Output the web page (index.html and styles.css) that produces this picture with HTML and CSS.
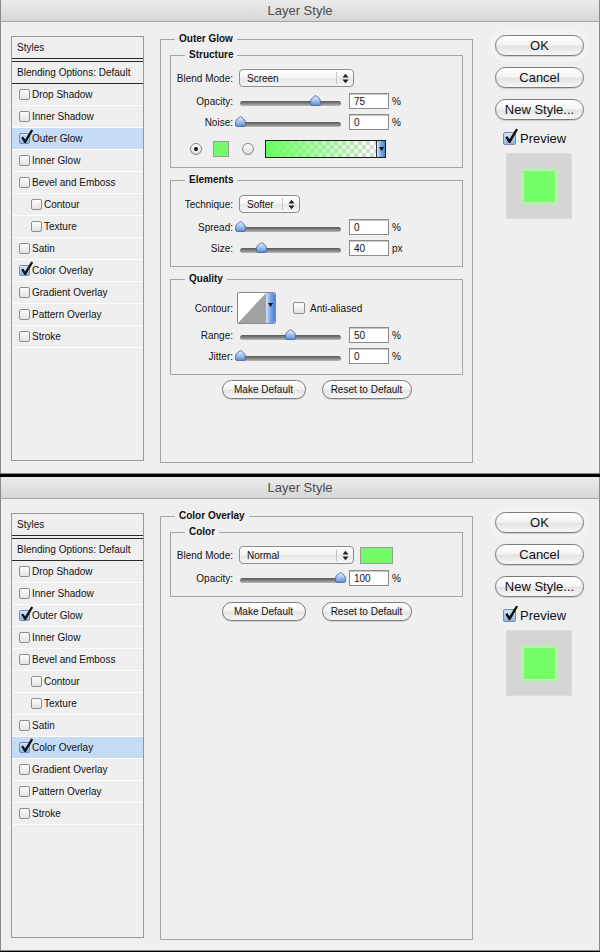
FILE: index.html
```html
<!DOCTYPE html>
<html lang="en">
<head>
    <meta charset="UTF-8">
    <title>Layer Style</title>
    <link rel="stylesheet" href="styles.css">
</head>
<body>
    <svg class="defs" width="0" height="0" aria-hidden="true">
        <defs>
            <linearGradient id="thumbFill" x1="0" y1="0" x2="0" y2="1">
                <stop offset="0" stop-color="#eef5ff"/>
                <stop offset="0.45" stop-color="#a9c8f0"/>
                <stop offset="1" stop-color="#5d90d8"/>
            </linearGradient>
        </defs>
    </svg>

    <!-- first dialog: outer glow -->
    <div class="dialog">
        <div class="titlebar">Layer Style</div>
        <div class="dialog-body">
            <ul class="style-list">
                <li class="list-head">Styles</li>
                <li class="list-blend">Blending Options: Default</li>
                <li><span class="check"></span>Drop Shadow</li>
                <li><span class="check"></span>Inner Shadow</li>
                <li class="selected"><span class="check on"><svg class="tick" viewBox="0 0 14 15"><path d="M1.2 8.8 3 7.6 5.1 10.6 11.2 0.6 13.2 1.4 5.9 14 4.5 14Z"/></svg></span>Outer Glow</li>
                <li><span class="check"></span>Inner Glow</li>
                <li><span class="check"></span>Bevel and Emboss</li>
                <li class="sub"><span class="check"></span>Contour</li>
                <li class="sub"><span class="check"></span>Texture</li>
                <li><span class="check"></span>Satin</li>
                <li><span class="check on"><svg class="tick" viewBox="0 0 14 15"><path d="M1.2 8.8 3 7.6 5.1 10.6 11.2 0.6 13.2 1.4 5.9 14 4.5 14Z"/></svg></span>Color Overlay</li>
                <li><span class="check"></span>Gradient Overlay</li>
                <li><span class="check"></span>Pattern Overlay</li>
                <li><span class="check"></span>Stroke</li>
            </ul>

            <fieldset class="group main-group">
                <legend>Outer Glow</legend>

                <fieldset class="group sub-group structure">
                    <legend>Structure</legend>
                    <div class="row row-select">
                        <span class="label">Blend Mode:</span>
                        <div class="popup popup-wide">
                            <span class="popup-text">Screen</span>
                            <span class="popup-arrows"><svg viewBox="0 0 7 11" width="7" height="11"><path d="M0.5 4.5 3.5 0.8 6.5 4.5Z M0.5 6.5 3.5 10.2 6.5 6.5Z"/></svg></span>
                        </div>
                    </div>
                    <div class="row">
                        <span class="label">Opacity:</span>
                        <div class="slider"><span class="thumb" style="--v:75"><svg viewBox="0 0 11 11"><path d="M5.5 0.6C7.6 2 10.4 3.6 10.4 6.2L10.4 9Q10.4 10.4 9 10.4L2 10.4Q0.6 10.4 0.6 9L0.6 6.2C0.6 3.6 3.4 2 5.5 0.6Z"/></svg></span></div>
                        <span class="num">75</span><span class="unit">%</span>
                    </div>
                    <div class="row">
                        <span class="label">Noise:</span>
                        <div class="slider"><span class="thumb" style="--v:0"><svg viewBox="0 0 11 11"><path d="M5.5 0.6C7.6 2 10.4 3.6 10.4 6.2L10.4 9Q10.4 10.4 9 10.4L2 10.4Q0.6 10.4 0.6 9L0.6 6.2C0.6 3.6 3.4 2 5.5 0.6Z"/></svg></span></div>
                        <span class="num">0</span><span class="unit">%</span>
                    </div>
                    <div class="row row-color">
                        <span class="radio on"></span>
                        <span class="swatch"></span>
                        <span class="radio"></span>
                        <div class="gradient">
                            <span class="gradient-fill"></span>
                            <span class="drop"><svg viewBox="0 0 5 4" width="5" height="4"><path d="M0 0H5L2.5 4Z"/></svg></span>
                        </div>
                    </div>
                </fieldset>

                <fieldset class="group sub-group elements">
                    <legend>Elements</legend>
                    <div class="row row-select">
                        <span class="label">Technique:</span>
                        <div class="popup popup-short">
                            <span class="popup-text">Softer</span>
                            <span class="popup-arrows"><svg viewBox="0 0 7 11" width="7" height="11"><path d="M0.5 4.5 3.5 0.8 6.5 4.5Z M0.5 6.5 3.5 10.2 6.5 6.5Z"/></svg></span>
                        </div>
                    </div>
                    <div class="row">
                        <span class="label">Spread:</span>
                        <div class="slider"><span class="thumb" style="--v:0"><svg viewBox="0 0 11 11"><path d="M5.5 0.6C7.6 2 10.4 3.6 10.4 6.2L10.4 9Q10.4 10.4 9 10.4L2 10.4Q0.6 10.4 0.6 9L0.6 6.2C0.6 3.6 3.4 2 5.5 0.6Z"/></svg></span></div>
                        <span class="num">0</span><span class="unit">%</span>
                    </div>
                    <div class="row">
                        <span class="label">Size:</span>
                        <div class="slider"><span class="thumb" style="--v:21"><svg viewBox="0 0 11 11"><path d="M5.5 0.6C7.6 2 10.4 3.6 10.4 6.2L10.4 9Q10.4 10.4 9 10.4L2 10.4Q0.6 10.4 0.6 9L0.6 6.2C0.6 3.6 3.4 2 5.5 0.6Z"/></svg></span></div>
                        <span class="num">40</span><span class="unit">px</span>
                    </div>
                </fieldset>

                <fieldset class="group sub-group quality">
                    <legend>Quality</legend>
                    <div class="row row-contour">
                        <span class="label">Contour:</span>
                        <div class="contour">
                            <svg class="contour-curve" viewBox="0 0 28 30" preserveAspectRatio="none"><path d="M0 30 28 0 28 30Z"/></svg>
                            <span class="drop"><svg viewBox="0 0 5 4" width="5" height="4"><path d="M0 0H5L2.5 4Z"/></svg></span>
                        </div>
                        <span class="check anti"></span>
                        <span class="check-label">Anti-aliased</span>
                    </div>
                    <div class="row row-range">
                        <span class="label">Range:</span>
                        <div class="slider"><span class="thumb" style="--v:50"><svg viewBox="0 0 11 11"><path d="M5.5 0.6C7.6 2 10.4 3.6 10.4 6.2L10.4 9Q10.4 10.4 9 10.4L2 10.4Q0.6 10.4 0.6 9L0.6 6.2C0.6 3.6 3.4 2 5.5 0.6Z"/></svg></span></div>
                        <span class="num">50</span><span class="unit">%</span>
                    </div>
                    <div class="row">
                        <span class="label">Jitter:</span>
                        <div class="slider"><span class="thumb" style="--v:0"><svg viewBox="0 0 11 11"><path d="M5.5 0.6C7.6 2 10.4 3.6 10.4 6.2L10.4 9Q10.4 10.4 9 10.4L2 10.4Q0.6 10.4 0.6 9L0.6 6.2C0.6 3.6 3.4 2 5.5 0.6Z"/></svg></span></div>
                        <span class="num">0</span><span class="unit">%</span>
                    </div>
                </fieldset>

                <div class="btn-row">
                    <button class="btn btn-small btn-make">Make Default</button>
                    <button class="btn btn-small btn-reset">Reset to Default</button>
                </div>
            </fieldset>

            <div class="side">
                <button class="btn btn-big btn-default">OK</button>
                <button class="btn btn-big">Cancel</button>
                <button class="btn btn-big">New Style...</button>
                <div class="preview-row">
                    <span class="check big on"><svg class="tick" viewBox="0 0 14 15"><path d="M1.2 8.8 3 7.6 5.1 10.6 11.2 0.6 13.2 1.4 5.9 14 4.5 14Z"/></svg></span>
                    <span>Preview</span>
                </div>
                <div class="preview-box"><span class="preview-swatch"></span></div>
            </div>
        </div>
    </div>

    <!-- second dialog: color overlay -->
    <div class="dialog">
        <div class="titlebar">Layer Style</div>
        <div class="dialog-body">
            <ul class="style-list">
                <li class="list-head">Styles</li>
                <li class="list-blend">Blending Options: Default</li>
                <li><span class="check"></span>Drop Shadow</li>
                <li><span class="check"></span>Inner Shadow</li>
                <li><span class="check on"><svg class="tick" viewBox="0 0 14 15"><path d="M1.2 8.8 3 7.6 5.1 10.6 11.2 0.6 13.2 1.4 5.9 14 4.5 14Z"/></svg></span>Outer Glow</li>
                <li><span class="check"></span>Inner Glow</li>
                <li><span class="check"></span>Bevel and Emboss</li>
                <li class="sub"><span class="check"></span>Contour</li>
                <li class="sub"><span class="check"></span>Texture</li>
                <li><span class="check"></span>Satin</li>
                <li class="selected"><span class="check on"><svg class="tick" viewBox="0 0 14 15"><path d="M1.2 8.8 3 7.6 5.1 10.6 11.2 0.6 13.2 1.4 5.9 14 4.5 14Z"/></svg></span>Color Overlay</li>
                <li><span class="check"></span>Gradient Overlay</li>
                <li><span class="check"></span>Pattern Overlay</li>
                <li><span class="check"></span>Stroke</li>
            </ul>

            <fieldset class="group main-group">
                <legend>Color Overlay</legend>

                <fieldset class="group sub-group color">
                    <legend>Color</legend>
                    <div class="row row-select">
                        <span class="label">Blend Mode:</span>
                        <div class="popup popup-wide">
                            <span class="popup-text">Normal</span>
                            <span class="popup-arrows"><svg viewBox="0 0 7 11" width="7" height="11"><path d="M0.5 4.5 3.5 0.8 6.5 4.5Z M0.5 6.5 3.5 10.2 6.5 6.5Z"/></svg></span>
                        </div>
                        <span class="swatch swatch-wide"></span>
                    </div>
                    <div class="row">
                        <span class="label">Opacity:</span>
                        <div class="slider"><span class="thumb" style="--v:100"><svg viewBox="0 0 11 11"><path d="M5.5 0.6C7.6 2 10.4 3.6 10.4 6.2L10.4 9Q10.4 10.4 9 10.4L2 10.4Q0.6 10.4 0.6 9L0.6 6.2C0.6 3.6 3.4 2 5.5 0.6Z"/></svg></span></div>
                        <span class="num">100</span><span class="unit">%</span>
                    </div>
                </fieldset>

                <div class="btn-row">
                    <button class="btn btn-small btn-make">Make Default</button>
                    <button class="btn btn-small btn-reset">Reset to Default</button>
                </div>
            </fieldset>

            <div class="side">
                <button class="btn btn-big btn-default">OK</button>
                <button class="btn btn-big">Cancel</button>
                <button class="btn btn-big">New Style...</button>
                <div class="preview-row">
                    <span class="check big on"><svg class="tick" viewBox="0 0 14 15"><path d="M1.2 8.8 3 7.6 5.1 10.6 11.2 0.6 13.2 1.4 5.9 14 4.5 14Z"/></svg></span>
                    <span>Preview</span>
                </div>
                <div class="preview-box"><span class="preview-swatch"></span></div>
            </div>
        </div>
    </div>
</body>
</html>
```

FILE: styles.css
```css
* {
    margin: 0;
    padding: 0;
    box-sizing: border-box;
}

body {
    width: 600px;
    background: #000;
    font-family: 'Liberation Sans', Arial, sans-serif;
    font-size: 10px;
    color: #111;
}

.defs {
    display: block;
    width: 0;
    height: 0;
}

.dialog {
    height: 474px;
    margin-bottom: 3px;
    background: #efefef;
    border: 1px solid #8a8a8a;
    border-top: none;
}

.titlebar {
    height: 22px;
    line-height: 21px;
    text-align: center;
    font-size: 13px;
    color: #4b4b4b;
    background: linear-gradient(#ececec, #d6d6d6);
    border-bottom: 1px solid #a6a6a6;
}

.dialog-body {
    display: flex;
    align-items: flex-start;
    padding: 11px 0 0 10px;
}

/* style list on the left */
.style-list {
    list-style: none;
    width: 133px;
    height: 425px;
    margin-top: 3px;
    border: 1px solid #979797;
    background: #efefef;
}

.style-list li {
    height: 22px;
    display: flex;
    align-items: center;
    padding-left: 7px;
    border-bottom: 1px solid #fbfbfb;
}

.style-list .list-head {
    padding-left: 5px;
    border-bottom: 1px solid #2a2a2a;
}

.style-list .list-blend {
    height: 23px;
    margin-top: 2px;
    padding-left: 5px;
    border-top: 1px solid #2a2a2a;
    border-bottom: 1px solid #2a2a2a;
}

.style-list .sub {
    padding-left: 19px;
}

.style-list .selected {
    background: #c6dbf6;
}

/* checkboxes */
.check {
    position: relative;
    flex: none;
    width: 11px;
    height: 11px;
    margin-right: 2px;
    border: 1px solid #8d8d8d;
    border-radius: 2px;
    background: linear-gradient(#fdfdfd, #e2e2e2);
}

.check.on {
    border-color: #6f8db8;
    background: linear-gradient(#d6e5f9, #8fb3e6);
}

.check.big {
    width: 13px;
    height: 13px;
    margin-right: 4px;
}

.tick {
    position: absolute;
    left: 0;
    top: -5px;
    width: 14px;
    height: 15px;
    fill: #111;
    overflow: visible;
}

.check.big .tick {
    top: -5px;
    width: 15px;
    height: 16px;
}

/* group boxes */
.group {
    border: 1px solid #a5a5a5;
    min-width: 0;
}

.group legend {
    font-weight: bold;
    line-height: 12px;
    padding: 0 4px;
}

.main-group {
    width: 313px;
    height: 430px;
    margin-left: 16px;
    padding: 4px 9px 0 9px;
}

.main-group > legend {
    margin-left: 5px;
}

.sub-group {
    width: 293px;
    padding: 0;
}

.sub-group > legend {
    margin-left: 14px;
}

.structure {
    padding: 8px 0 9px;
}

.elements {
    margin-top: 6px;
    padding: 9px 0 10px;
}

.quality {
    margin-top: 6px;
    padding: 7px 0 10px;
}

.color {
    padding: 8px 0 10px;
}

.row {
    display: flex;
    align-items: center;
    height: 16px;
    margin-top: 5px;
}

.row:first-of-type {
    margin-top: 0;
}

.row-select {
    height: 18px;
}

.row-select + .row {
    margin-top: 6px;
}

.row-color {
    height: 18px;
    margin-top: 10px;
}

.row-contour {
    height: 32px;
}

.row-range {
    margin-top: 3px;
}

.label {
    width: 62px;
    margin-right: 6px;
    text-align: right;
    flex: none;
}

.row-contour .label {
    margin-right: 4px;
}

/* popup menus */
.popup {
    display: flex;
    align-items: center;
    height: 18px;
    padding-left: 7px;
    border: 1px solid #8e8e8e;
    border-radius: 4px;
    background: linear-gradient(#ffffff, #f3f3f3 50%, #e7e7e7 52%, #f6f6f6);
}

.popup-wide {
    width: 115px;
}

.popup-short {
    width: 61px;
}

.popup-text {
    flex: 1;
}

.popup-arrows {
    display: flex;
    align-items: center;
    justify-content: center;
    width: 17px;
    height: 12px;
    border-left: 1px solid #c4c4c4;
}

.popup-arrows svg {
    fill: #222;
}

/* sliders */
.slider {
    position: relative;
    flex: none;
    width: 101px;
    height: 5px;
    margin: 4px 0 0 1px;
    border-radius: 3px;
    background: linear-gradient(#595959, #8c8c8c 60%, #bdbdbd);
}

.thumb {
    position: absolute;
    bottom: 0;
    left: calc(var(--v) * 1px - 5px);
    width: 11px;
    height: 11px;
}

.thumb svg {
    display: block;
    width: 11px;
    height: 11px;
    fill: url(#thumbFill);
    stroke: #4a6a9a;
    stroke-width: 0.9;
}

.num {
    width: 40px;
    height: 16px;
    margin-left: 8px;
    padding-left: 4px;
    line-height: 15px;
    background: #fff;
    border: 1px solid #8c8c8c;
    box-shadow: inset 0 1px 0 #c8c8c8;
}

.unit {
    margin-left: 3px;
}

/* color row */
.radio {
    display: flex;
    align-items: center;
    justify-content: center;
    flex: none;
    width: 12px;
    height: 12px;
    border-radius: 50%;
    border: 1px solid #858585;
    background: linear-gradient(#fefefe, #d9d9d9);
}

.radio.on::after {
    content: '';
    width: 4px;
    height: 4px;
    border-radius: 50%;
    background: #111;
}

.row-color .radio.on {
    margin-left: 19px;
}

.swatch {
    flex: none;
    width: 16px;
    height: 16px;
    margin: 0 13px 0 11px;
    background: #74fb68;
    border: 1px solid #9a9a9a;
}

.swatch-wide {
    width: 33px;
    height: 17px;
    margin: 0 0 0 6px;
}

.gradient {
    display: flex;
    width: 121px;
    height: 18px;
    margin-left: 11px;
    border: 1px solid #1c1c1c;
}

.gradient-fill {
    flex: 1;
    background:
        linear-gradient(to right, #68ff5e, rgba(104, 255, 94, 0.55) 45%, rgba(104, 255, 94, 0) 100%),
        linear-gradient(45deg, #d7d7d7 25%, transparent 25%, transparent 75%, #d7d7d7 75%),
        linear-gradient(45deg, #d7d7d7 25%, #fff 25%, #fff 75%, #d7d7d7 75%);
    background-size: 100% 100%, 8px 8px, 8px 8px;
    background-position: 0 0, 0 0, 4px 4px;
}

.drop {
    display: flex;
    justify-content: center;
    width: 9px;
    padding-top: 6px;
    border-left: 1px solid #333;
    background: linear-gradient(to right, #d4e4fa, #7aa6e6 50%, #4b80d2);
}

.drop svg {
    fill: #111;
}

/* contour picker */
.contour {
    display: flex;
    width: 39px;
    height: 32px;
    background: #fff;
    border: 1px solid #8a8a8a;
    border-radius: 2px;
}

.contour-curve {
    flex: 1;
    height: 100%;
    fill: #a1a1a1;
}

.contour .drop {
    padding-top: 10px;
    border-left: none;
    border-radius: 0 2px 2px 0;
}

.check.anti {
    width: 12px;
    height: 12px;
    margin: 0 5px 0 17px;
}

/* buttons */
.btn {
    display: flex;
    align-items: center;
    justify-content: center;
    font-family: 'Liberation Sans', Arial, sans-serif;
    color: #111;
    border: 1px solid #7c7c7c;
    background: linear-gradient(#ffffff, #f4f4f4 45%, #e4e4e4 55%, #f7f7f7);
    box-shadow: 0 1px 1px rgba(0, 0, 0, 0.15);
}

.btn-row {
    display: flex;
    justify-content: center;
    gap: 16px;
    margin-top: 5px;
}

.btn-small {
    height: 19px;
    font-size: 10px;
    border-radius: 10px;
}

.btn-make {
    width: 84px;
}

.btn-reset {
    width: 90px;
}

.side {
    display: flex;
    flex-direction: column;
    width: 89px;
    margin: 2px 0 0 22px;
}

.btn-big {
    width: 89px;
    height: 21px;
    margin-bottom: 11px;
    font-size: 13px;
    border-radius: 11px;
}

.btn-default {
    box-shadow: 0 1px 1px rgba(0, 0, 0, 0.15), 0 0 0 5px #f3f3f3;
}

.preview-row {
    display: flex;
    align-items: center;
    height: 14px;
    padding-left: 8px;
    font-size: 13px;
}

.preview-box {
    display: flex;
    align-items: center;
    justify-content: center;
    width: 66px;
    height: 66px;
    margin: 8px 0 0 11px;
    background: #d5d5d5;
    border: 1px solid #dcdcdc;
}

.preview-swatch {
    width: 31px;
    height: 31px;
    background: #75ff66;
    box-shadow: 0 0 4px 2px rgba(170, 255, 160, 0.8);
}
```
